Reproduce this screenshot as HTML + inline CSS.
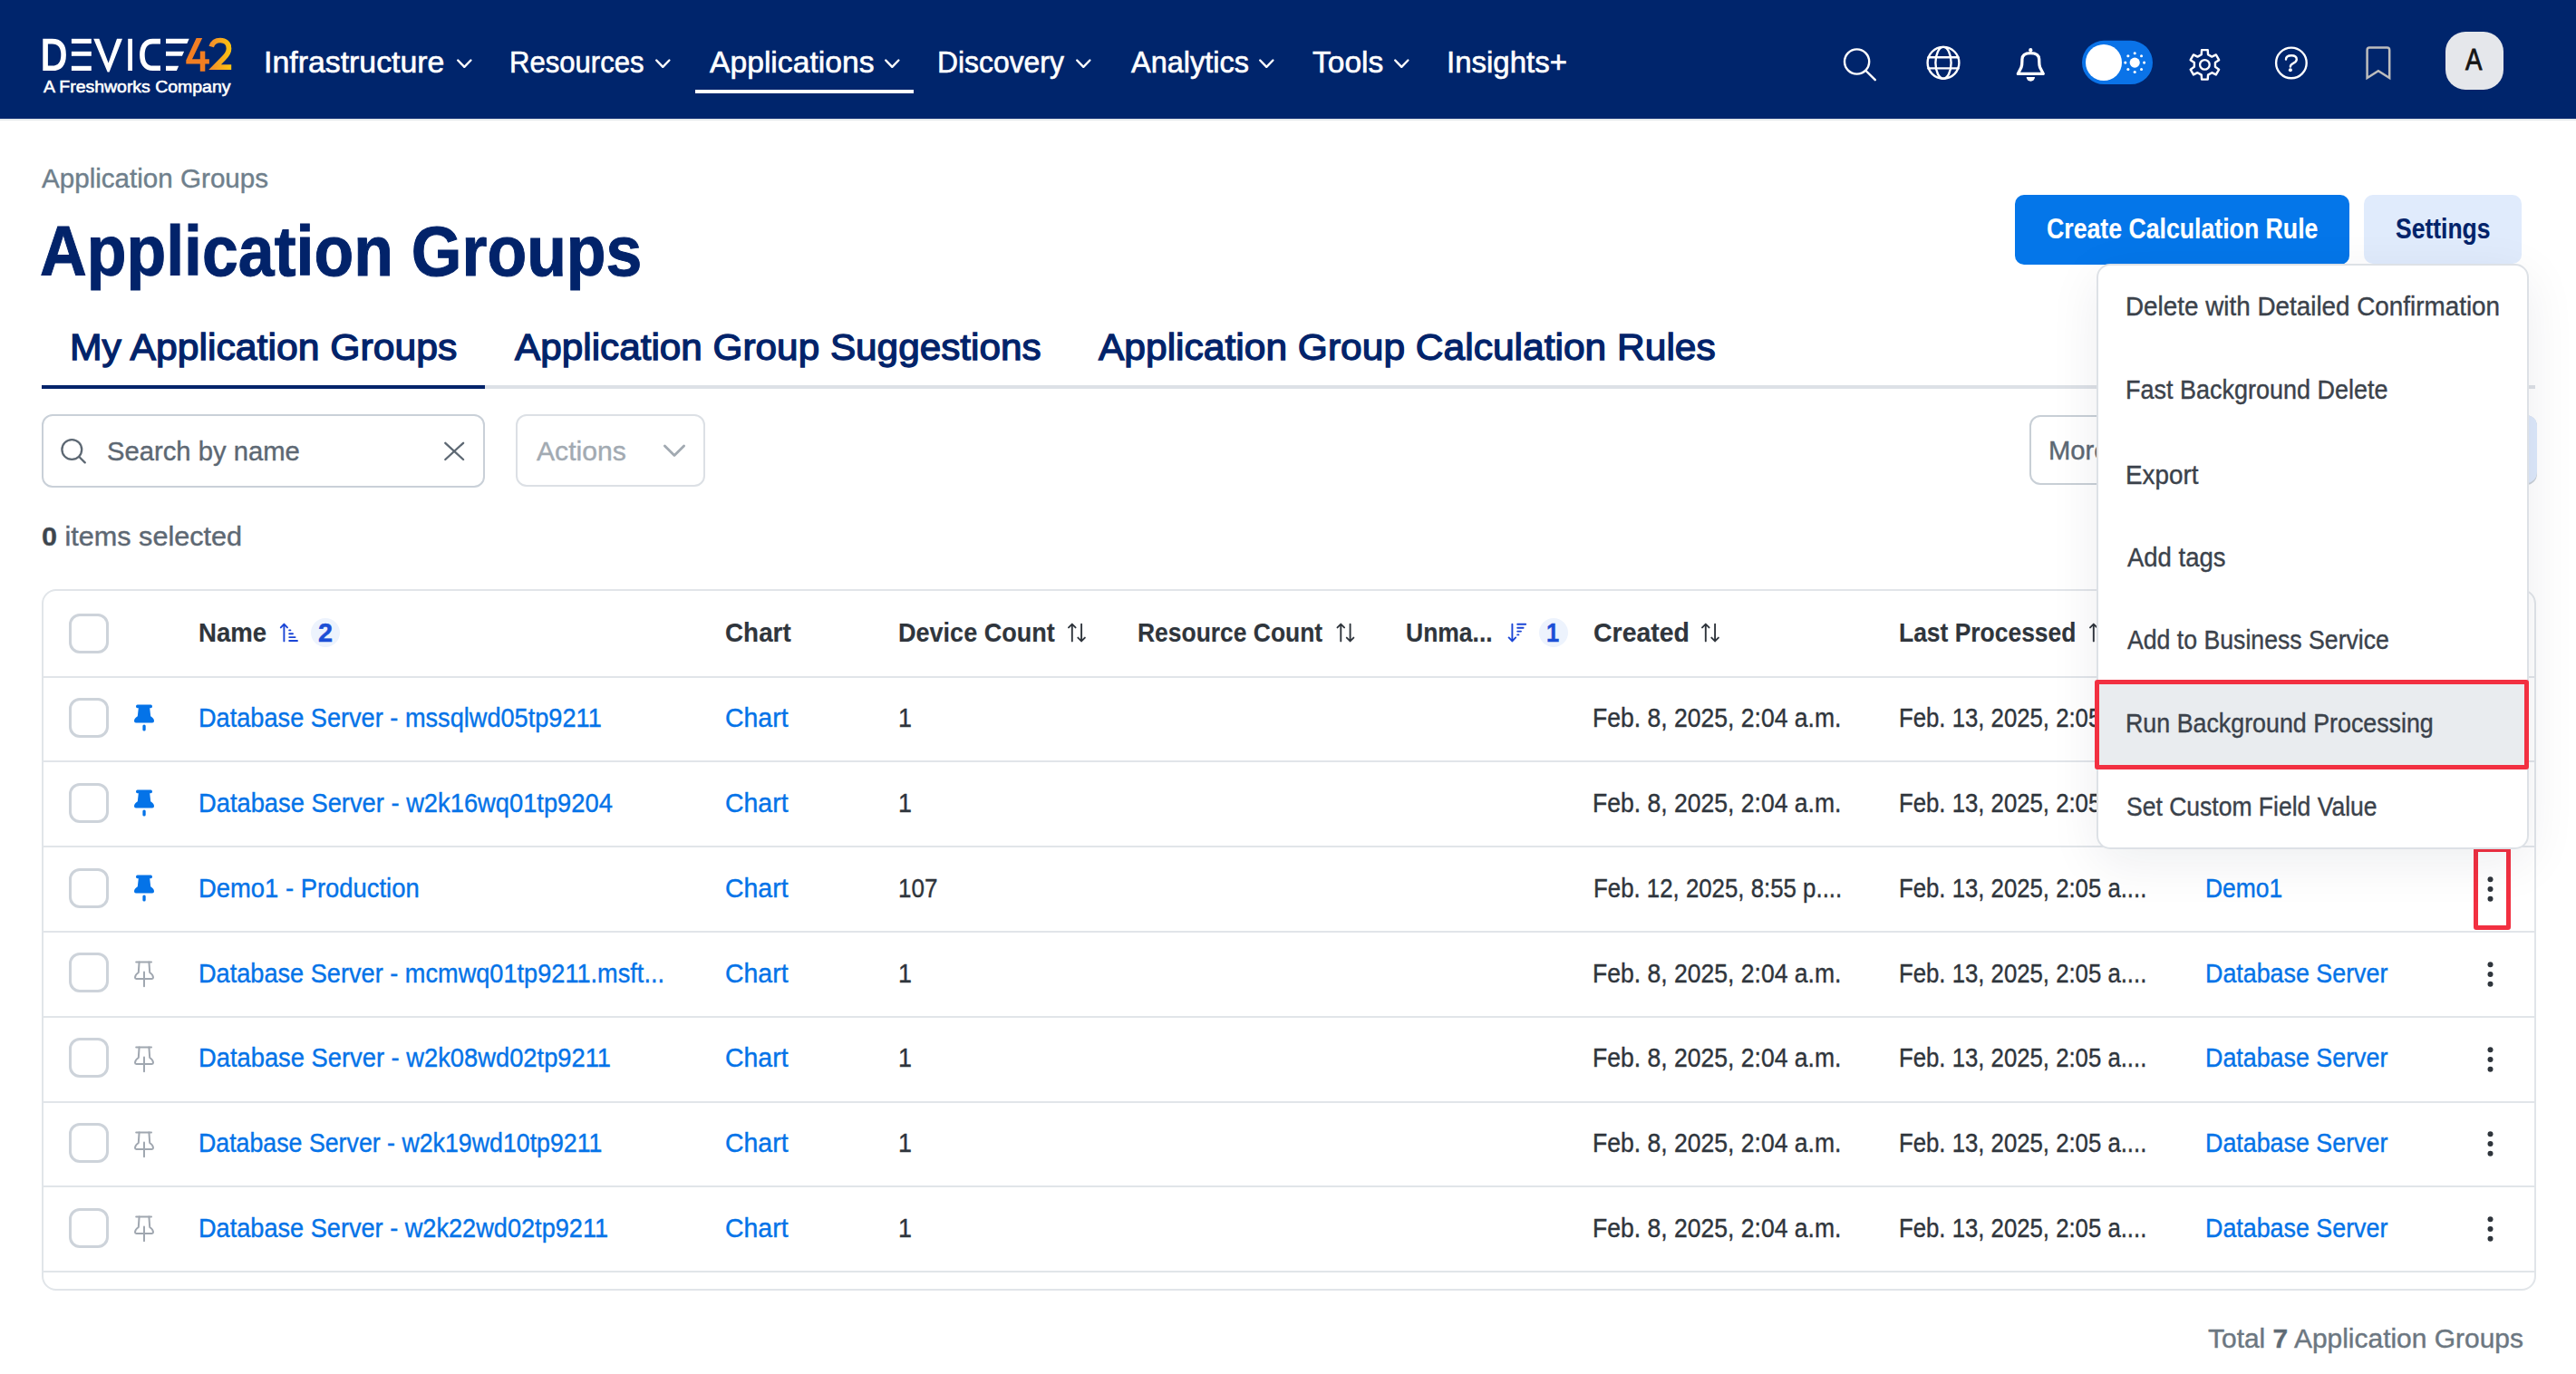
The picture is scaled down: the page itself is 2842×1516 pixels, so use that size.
<!DOCTYPE html>
<html><head><meta charset="utf-8"><title>Application Groups</title>
<style>
html,body{margin:0;padding:0;background:#fff;}
body{position:relative;width:2842px;height:1516px;overflow:hidden;font-family:"Liberation Sans",sans-serif;}
.t{position:absolute;white-space:nowrap;line-height:1;transform-origin:0 0;font-family:"Liberation Sans",sans-serif;}
.a{position:absolute;box-sizing:border-box;}
svg{position:absolute;overflow:visible;}
</style></head><body>

<div class="a" style="left:0;top:0;width:2842px;height:131px;background:#00256c"></div>
<div class="a" style="left:0;top:131px;width:2842px;height:2px;background:#e3e7ea"></div>
<svg style="left:40px;top:36px" width="220" height="76" viewBox="0 0 220 76">
<defs><linearGradient id="g2" x1="0" y1="0" x2="1" y2="0"><stop offset="0" stop-color="#f4902a"/><stop offset="1" stop-color="#fdc40f"/></linearGradient></defs>
<path d="M10.1,9.6 H17.5 C26.5,9.6 30.1,15.5 30.1,24.4 C30.1,33.3 26.5,39.3 17.5,39.3 H10.1 Z" fill="none" stroke="#fff" stroke-width="5.6"/>
<rect x="38.9" y="6.8" width="21.9" height="5.2" fill="#fff"/>
<rect x="38.9" y="20.8" width="21.9" height="5" fill="#fff"/>
<rect x="38.9" y="36.8" width="21.9" height="5.2" fill="#fff"/>
<path d="M63.2,6.8 H69.4 L79.6,33.6 L89,6.8 H95 L80.6,43.6 H78.6 Z" fill="#fff"/>
<rect x="101.2" y="6.8" width="4.8" height="35.2" fill="#fff"/>
<path d="M137,9.6 H128.5 C120.5,9.6 116.9,15.5 116.9,24.4 C116.9,33.3 120.5,39.3 128.5,39.3 H137" fill="none" stroke="#fff" stroke-width="5.6"/>
<path d="M143,6.8 H168.7 L166.4,12 H143 Z" fill="#fff"/>
<path d="M143,20.8 H163.1 L160.9,25.8 H143 Z" fill="#fff"/>
<path d="M143,36.8 H157.2 L154.9,42 H143 Z" fill="#fff"/>
<path d="M176.6,6 H183.2 L172,29.2 H180.8 V20.5 H186.3 V29.2 H190.9 V34.4 H186.3 V42.7 H180.8 V34.4 H165.3 V30.4 Z" fill="#f27e22"/>
<path d="M193.2,15.5 C195,9.5 199,8.5 203,8.5 C208.5,8.5 212.5,12 212.5,17.5 C212.5,21.5 210.5,24.5 207,28 L197,38.2 H215.2" fill="none" stroke="url(#g2)" stroke-width="5.7"/>
</svg>
<svg style="left:503.75px;top:65px" width="17" height="11" viewBox="0 0 17 11"><polyline points="1.2,1.5 8.3,8.8 15.4,1.5" fill="none" stroke="#fff" stroke-width="2.4" stroke-linecap="round" stroke-linejoin="round"/></svg>
<svg style="left:723.00px;top:65px" width="17" height="11" viewBox="0 0 17 11"><polyline points="1.2,1.5 8.3,8.8 15.4,1.5" fill="none" stroke="#fff" stroke-width="2.4" stroke-linecap="round" stroke-linejoin="round"/></svg>
<svg style="left:976.00px;top:65px" width="17" height="11" viewBox="0 0 17 11"><polyline points="1.2,1.5 8.3,8.8 15.4,1.5" fill="none" stroke="#fff" stroke-width="2.4" stroke-linecap="round" stroke-linejoin="round"/></svg>
<svg style="left:1187.00px;top:65px" width="17" height="11" viewBox="0 0 17 11"><polyline points="1.2,1.5 8.3,8.8 15.4,1.5" fill="none" stroke="#fff" stroke-width="2.4" stroke-linecap="round" stroke-linejoin="round"/></svg>
<svg style="left:1389.00px;top:65px" width="17" height="11" viewBox="0 0 17 11"><polyline points="1.2,1.5 8.3,8.8 15.4,1.5" fill="none" stroke="#fff" stroke-width="2.4" stroke-linecap="round" stroke-linejoin="round"/></svg>
<svg style="left:1537.80px;top:65px" width="17" height="11" viewBox="0 0 17 11"><polyline points="1.2,1.5 8.3,8.8 15.4,1.5" fill="none" stroke="#fff" stroke-width="2.4" stroke-linecap="round" stroke-linejoin="round"/></svg>
<div class="a" style="left:767px;top:99px;width:241px;height:4px;background:#fff"></div>
<svg style="left:0;top:0" width="2842" height="131" viewBox="0 0 2842 131">
<g fill="none" stroke="#fff" stroke-width="2.4" stroke-linecap="round" stroke-linejoin="round">
<circle cx="2048.6" cy="68" r="13.6"/>
<line x1="2058.5" y1="78" x2="2068.8" y2="88.2"/>
<circle cx="2144" cy="69.3" r="17.4"/>
<ellipse cx="2144" cy="69.3" rx="8.6" ry="17.4"/>
<line x1="2127.5" y1="63.2" x2="2160.5" y2="63.2"/>
<line x1="2127.5" y1="75.4" x2="2160.5" y2="75.4"/>
<path d="M2226.3,81.4 L2229.9,74.6 C2230.8,72.4 2230.9,70 2230.9,67 L2230.9,65.6 C2230.9,60.9 2234.6,58.6 2240.3,58.6 C2246,58.6 2249.7,60.9 2249.7,65.6 L2249.7,67 C2249.7,70 2249.8,72.4 2250.7,74.6 L2254.3,81.4 Z" stroke-width="3.3"/>
<circle cx="2527.9" cy="69.4" r="16.8"/>
<path d="M2522,65.6 C2522,62.6 2524.6,61.3 2528.1,61.3 C2531.6,61.3 2533.8,63.1 2533.8,65.6 C2533.8,68.2 2531.6,69.1 2529.6,70.1 C2527.6,71.1 2526.9,71.6 2526.9,73.5"/>
</g>
<circle cx="2240.3" cy="55.2" r="2.1" fill="#fff"/>
<path d="M2235.7,85 A4.65,4.65 0 0 0 2245,85 Z" fill="#fff"/>
<circle cx="2526.9" cy="77.3" r="2" fill="#fff"/>

<path d="M2428.75,60.18 L2429.09,55.13 L2435.71,55.13 L2436.05,60.18 L2440.30,62.63 L2444.83,60.40 L2448.14,66.13 L2443.94,68.95 L2443.94,73.85 L2448.14,76.67 L2444.83,82.40 L2440.30,80.17 L2436.05,82.62 L2435.71,87.67 L2429.09,87.67 L2428.75,82.62 L2424.50,80.17 L2419.97,82.40 L2416.66,76.67 L2420.86,73.85 L2420.86,68.95 L2416.66,66.13 L2419.97,60.40 L2424.50,62.63 Z" fill="none" stroke="#fff" stroke-width="2.4" stroke-linejoin="round"/>
<circle cx="2432.4" cy="71.4" r="5.3" fill="none" stroke="#fff" stroke-width="2.3"/>
<path d="M2611.6,86 V55.2 Q2611.6,52.6 2614.2,52.6 H2633.6 Q2636.2,52.6 2636.2,55.2 V86 L2623.9,78.2 Z" fill="none" stroke="#bdbdbd" stroke-width="2.5" stroke-linejoin="miter"/>
<rect x="2297" y="44.8" width="78" height="48.3" rx="24.15" fill="#0a73e8"/>
<circle cx="2321" cy="69" r="20" fill="#fff"/>
<circle cx="2355.2" cy="69.1" r="5.6" fill="#fff"/>
<circle cx="2365.60" cy="69.10" r="1.55" fill="#fff"/>
<circle cx="2362.55" cy="76.45" r="1.55" fill="#fff"/>
<circle cx="2355.20" cy="79.50" r="1.55" fill="#fff"/>
<circle cx="2347.85" cy="76.45" r="1.55" fill="#fff"/>
<circle cx="2344.80" cy="69.10" r="1.55" fill="#fff"/>
<circle cx="2347.85" cy="61.75" r="1.55" fill="#fff"/>
<circle cx="2355.20" cy="58.70" r="1.55" fill="#fff"/>
<circle cx="2362.55" cy="61.75" r="1.55" fill="#fff"/>
</svg>
<div class="a" style="left:2698px;top:34.6px;width:64px;height:64px;border-radius:22px;background:#e5e7eb"></div>
<div class="a" style="left:2223px;top:215px;width:369px;height:76.5px;border-radius:10px;background:#0476e9"></div>
<div class="a" style="left:2608px;top:215px;width:174px;height:76px;border-radius:10px;background:#e0ebfc"></div>
<div class="a" style="left:46px;top:425px;width:2751px;height:3.5px;background:#dde1e6"></div>
<div class="a" style="left:46px;top:425px;width:489px;height:4px;background:#02236a"></div>
<div class="a" style="left:46px;top:457.3px;width:489px;height:80.5px;border:2px solid #c9d0d8;border-radius:12px"></div>
<svg style="left:0;top:0" width="800" height="560" viewBox="0 0 800 560"><g fill="none" stroke="#5d6873" stroke-width="2.3" stroke-linecap="round"><circle cx="79.3" cy="496" r="10.9"/><line x1="87.3" y1="504" x2="93.7" y2="510.4"/><line x1="491.3" y1="488.8" x2="511.1" y2="507"/><line x1="511.1" y1="488.8" x2="491.3" y2="507"/></g><polyline points="733.4,492 744,502.4 754.6,492" fill="none" stroke="#a2aab2" stroke-width="2.8" stroke-linecap="round" stroke-linejoin="round"/></svg>
<div class="a" style="left:569px;top:457.3px;width:209px;height:80px;border:2px solid #dce0e5;border-radius:12px"></div>
<div class="a" style="left:2238.6px;top:457.5px;width:560px;height:77px;border:2px solid #c8cfd6;border-radius:12px"></div>
<div class="a" style="left:2770px;top:457.5px;width:28.5px;height:75px;border-radius:12px;background:#dde9fb"></div>
<div class="a" style="left:46px;top:650px;width:2751.5px;height:774px;border:2px solid #e1e5e9;border-radius:16px"></div>
<div class="a" style="left:48px;top:745.60px;width:2748px;height:2px;background:#e1e5e9"></div>
<div class="a" style="left:48px;top:839.40px;width:2748px;height:2px;background:#e1e5e9"></div>
<div class="a" style="left:48px;top:933.20px;width:2748px;height:2px;background:#e1e5e9"></div>
<div class="a" style="left:48px;top:1027.00px;width:2748px;height:2px;background:#e1e5e9"></div>
<div class="a" style="left:48px;top:1120.80px;width:2748px;height:2px;background:#e1e5e9"></div>
<div class="a" style="left:48px;top:1214.60px;width:2748px;height:2px;background:#e1e5e9"></div>
<div class="a" style="left:48px;top:1308.40px;width:2748px;height:2px;background:#e1e5e9"></div>
<div class="a" style="left:48px;top:1402.20px;width:2748px;height:2px;background:#e1e5e9"></div>
<div class="a" style="left:76px;top:676.50px;width:44px;height:44px;border:3.7px solid #cdd3da;border-radius:12px"></div>
<div class="a" style="left:76px;top:770.00px;width:44px;height:44px;border:3.7px solid #cdd3da;border-radius:12px"></div>
<div class="a" style="left:76px;top:863.80px;width:44px;height:44px;border:3.7px solid #cdd3da;border-radius:12px"></div>
<div class="a" style="left:76px;top:957.60px;width:44px;height:44px;border:3.7px solid #cdd3da;border-radius:12px"></div>
<div class="a" style="left:76px;top:1051.40px;width:44px;height:44px;border:3.7px solid #cdd3da;border-radius:12px"></div>
<div class="a" style="left:76px;top:1145.20px;width:44px;height:44px;border:3.7px solid #cdd3da;border-radius:12px"></div>
<div class="a" style="left:76px;top:1239.00px;width:44px;height:44px;border:3.7px solid #cdd3da;border-radius:12px"></div>
<div class="a" style="left:76px;top:1332.80px;width:44px;height:44px;border:3.7px solid #cdd3da;border-radius:12px"></div>
<svg style="left:146px;top:777.00px" width="26" height="32" viewBox="0 0 26 32"><path d="M5.6,0.6 H20.4 Q22,0.6 22,2.4 Q22,4.2 20.4,4.2 H19.2 L20.2,13.2 Q24,15.4 24,18.6 Q24,20.6 22,20.6 H4 Q2,20.6 2,18.6 Q2,15.4 5.8,13.2 L6.8,4.2 H5.6 Q4,4.2 4,2.4 Q4,0.6 5.6,0.6 Z" fill="#0473e8"/><rect x="11.4" y="22.4" width="3.3" height="7.2" rx="1.6" fill="#0473e8"/></svg>
<svg style="left:146px;top:870.80px" width="26" height="32" viewBox="0 0 26 32"><path d="M5.6,0.6 H20.4 Q22,0.6 22,2.4 Q22,4.2 20.4,4.2 H19.2 L20.2,13.2 Q24,15.4 24,18.6 Q24,20.6 22,20.6 H4 Q2,20.6 2,18.6 Q2,15.4 5.8,13.2 L6.8,4.2 H5.6 Q4,4.2 4,2.4 Q4,0.6 5.6,0.6 Z" fill="#0473e8"/><rect x="11.4" y="22.4" width="3.3" height="7.2" rx="1.6" fill="#0473e8"/></svg>
<svg style="left:146px;top:964.60px" width="26" height="32" viewBox="0 0 26 32"><path d="M5.6,0.6 H20.4 Q22,0.6 22,2.4 Q22,4.2 20.4,4.2 H19.2 L20.2,13.2 Q24,15.4 24,18.6 Q24,20.6 22,20.6 H4 Q2,20.6 2,18.6 Q2,15.4 5.8,13.2 L6.8,4.2 H5.6 Q4,4.2 4,2.4 Q4,0.6 5.6,0.6 Z" fill="#0473e8"/><rect x="11.4" y="22.4" width="3.3" height="7.2" rx="1.6" fill="#0473e8"/></svg>
<svg style="left:146px;top:1059.90px" width="26" height="32" viewBox="0 0 26 32"><g fill="none" stroke="#a0a7b0" stroke-width="2" stroke-linecap="round" stroke-linejoin="round"><path d="M4.2,1.4 H21"/><path d="M7.6,1.4 L6.8,13 Q3,15.4 3,18.6 Q3,19.9 4.4,19.9 H21.6 Q23,19.9 23,18.6 Q23,15.4 19.2,13 L18.4,1.4"/><path d="M13,12.4 V28.2"/></g></svg>
<svg style="left:146px;top:1153.70px" width="26" height="32" viewBox="0 0 26 32"><g fill="none" stroke="#a0a7b0" stroke-width="2" stroke-linecap="round" stroke-linejoin="round"><path d="M4.2,1.4 H21"/><path d="M7.6,1.4 L6.8,13 Q3,15.4 3,18.6 Q3,19.9 4.4,19.9 H21.6 Q23,19.9 23,18.6 Q23,15.4 19.2,13 L18.4,1.4"/><path d="M13,12.4 V28.2"/></g></svg>
<svg style="left:146px;top:1247.50px" width="26" height="32" viewBox="0 0 26 32"><g fill="none" stroke="#a0a7b0" stroke-width="2" stroke-linecap="round" stroke-linejoin="round"><path d="M4.2,1.4 H21"/><path d="M7.6,1.4 L6.8,13 Q3,15.4 3,18.6 Q3,19.9 4.4,19.9 H21.6 Q23,19.9 23,18.6 Q23,15.4 19.2,13 L18.4,1.4"/><path d="M13,12.4 V28.2"/></g></svg>
<svg style="left:146px;top:1341.30px" width="26" height="32" viewBox="0 0 26 32"><g fill="none" stroke="#a0a7b0" stroke-width="2" stroke-linecap="round" stroke-linejoin="round"><path d="M4.2,1.4 H21"/><path d="M7.6,1.4 L6.8,13 Q3,15.4 3,18.6 Q3,19.9 4.4,19.9 H21.6 Q23,19.9 23,18.6 Q23,15.4 19.2,13 L18.4,1.4"/><path d="M13,12.4 V28.2"/></g></svg>
<svg style="left:0;top:0" width="1950" height="760" viewBox="0 0 1950 760">
<g fill="none" stroke-linecap="round" stroke-linejoin="round" stroke-width="1.9">
<g stroke="#1a45d6"><path d="M313.4,707.4 V688.6 M309.8,692.4 L313.4,688.6 L317,692.4"/>
<path d="M319.2,695.4 H320.4 M319.2,699.2 H323 M319.2,703.1 H325.6 M319.2,707 H328"/>
<path d="M1668.4,688.6 V707.4 M1664.6,703.4 L1668.4,707.4 L1672.2,703.4"/>
<path d="M1674.2,688.8 H1683.2 M1674.2,692.7 H1680.6 M1674.2,696.6 H1678 M1674.2,700.4 H1675.4"/></g>
<g stroke="#2f353c">
<path d="M1182.8,707.4 V688.6 M1179.0,692.4 L1182.8,688.6 L1186.6,692.4 M1193.1,688.6 V707.4 M1189.3,703.6 L1193.1,707.4 L1196.9,703.6"/>
<path d="M1479.3,707.4 V688.6 M1475.5,692.4 L1479.3,688.6 L1483.1,692.4 M1489.6,688.6 V707.4 M1485.8,703.6 L1489.6,707.4 L1493.4,703.6"/>
<path d="M1881.8,707.4 V688.6 M1878.0,692.4 L1881.8,688.6 L1885.6,692.4 M1892.1,688.6 V707.4 M1888.3,703.6 L1892.1,707.4 L1895.9,703.6"/>
<path d="M2309.8,707.4 V688.6 M2306.0,692.4 L2309.8,688.6 L2313.6,692.4 M2320.1,688.6 V707.4 M2316.3,703.6 L2320.1,707.4 L2323.9,703.6"/>
</g></g><circle cx="359" cy="698" r="16" fill="#edf3fd"/><circle cx="1714" cy="698" r="16" fill="#edf3fd"/></svg>
<svg style="left:2740px;top:965.90px" width="15" height="30" viewBox="0 0 15 30"><circle cx="7.5" cy="4.3" r="3" fill="#2f353c"/><circle cx="7.5" cy="15" r="3" fill="#2f353c"/><circle cx="7.5" cy="25.7" r="3" fill="#2f353c"/></svg>
<svg style="left:2740px;top:1059.70px" width="15" height="30" viewBox="0 0 15 30"><circle cx="7.5" cy="4.3" r="3" fill="#2f353c"/><circle cx="7.5" cy="15" r="3" fill="#2f353c"/><circle cx="7.5" cy="25.7" r="3" fill="#2f353c"/></svg>
<svg style="left:2740px;top:1153.50px" width="15" height="30" viewBox="0 0 15 30"><circle cx="7.5" cy="4.3" r="3" fill="#2f353c"/><circle cx="7.5" cy="15" r="3" fill="#2f353c"/><circle cx="7.5" cy="25.7" r="3" fill="#2f353c"/></svg>
<svg style="left:2740px;top:1247.30px" width="15" height="30" viewBox="0 0 15 30"><circle cx="7.5" cy="4.3" r="3" fill="#2f353c"/><circle cx="7.5" cy="15" r="3" fill="#2f353c"/><circle cx="7.5" cy="25.7" r="3" fill="#2f353c"/></svg>
<svg style="left:2740px;top:1341.10px" width="15" height="30" viewBox="0 0 15 30"><circle cx="7.5" cy="4.3" r="3" fill="#2f353c"/><circle cx="7.5" cy="15" r="3" fill="#2f353c"/><circle cx="7.5" cy="25.7" r="3" fill="#2f353c"/></svg>
<div class="a" style="left:2728.5px;top:934.5px;width:41.5px;height:91.5px;border:5.2px solid #f23041;border-radius:3px"></div>
<div class="t" style="left:291.46px;top:51.65px;font-size:33.43px;font-weight:400;color:#ffffff;transform:scaleX(1.0130);-webkit-text-stroke:0.6px #ffffff">Infrastructure</div>
<div class="t" style="left:562.21px;top:51.65px;font-size:33.43px;font-weight:400;color:#ffffff;transform:scaleX(0.9295);-webkit-text-stroke:0.6px #ffffff">Resources</div>
<div class="t" style="left:782.75px;top:51.65px;font-size:33.43px;font-weight:400;color:#ffffff;transform:scaleX(1.0070);-webkit-text-stroke:0.6px #ffffff">Applications</div>
<div class="t" style="left:1033.84px;top:51.65px;font-size:33.43px;font-weight:400;color:#ffffff;transform:scaleX(0.9535);-webkit-text-stroke:0.6px #ffffff">Discovery</div>
<div class="t" style="left:1247.50px;top:51.65px;font-size:33.43px;font-weight:400;color:#ffffff;transform:scaleX(0.9714);-webkit-text-stroke:0.6px #ffffff">Analytics</div>
<div class="t" style="left:1448.30px;top:51.65px;font-size:33.43px;font-weight:400;color:#ffffff;transform:scaleX(1.0026);-webkit-text-stroke:0.6px #ffffff">Tools</div>
<div class="t" style="left:1595.94px;top:51.65px;font-size:33.43px;font-weight:400;color:#ffffff;transform:scaleX(0.9877);-webkit-text-stroke:0.6px #ffffff">Insights+</div>
<div class="t" style="left:47.70px;top:86.52px;font-size:18.02px;font-weight:400;color:#ffffff;transform:scaleX(1.0796);-webkit-text-stroke:0.55px #ffffff">A Freshworks Company</div>
<div class="t" style="left:2720.00px;top:49.94px;font-size:32.85px;font-weight:400;color:#151515;transform:scaleX(0.8409);-webkit-text-stroke:0.8px #151515">A</div>
<div class="t" style="left:46.25px;top:183.35px;font-size:29.07px;font-weight:400;color:#6f7f8c;transform:scaleX(1.0184);-webkit-text-stroke:0.4px #6f7f8c">Application Groups</div>
<div class="t" style="left:44.42px;top:237.94px;font-size:78.49px;font-weight:700;color:#02236a;transform:scaleX(0.9125);-webkit-text-stroke:1.0px #02236a">Application Groups</div>
<div class="t" style="left:76.88px;top:362.68px;font-size:41.06px;font-weight:400;color:#02236a;transform:scaleX(1.0406);-webkit-text-stroke:1.3px #02236a">My Application Groups</div>
<div class="t" style="left:567.50px;top:362.68px;font-size:41.06px;font-weight:400;color:#02236a;transform:scaleX(1.0302);-webkit-text-stroke:1.3px #02236a">Application Group Suggestions</div>
<div class="t" style="left:1212.00px;top:362.68px;font-size:41.06px;font-weight:400;color:#02236a;transform:scaleX(1.0360);-webkit-text-stroke:1.3px #02236a">Application Group Calculation Rules</div>
<div class="t" style="left:2257.89px;top:237.56px;font-size:30.89px;font-weight:700;color:#ffffff;transform:scaleX(0.8638);-webkit-text-stroke:0.15px #ffffff">Create Calculation Rule</div>
<div class="t" style="left:2642.89px;top:237.56px;font-size:30.89px;font-weight:700;color:#02236a;transform:scaleX(0.8583);-webkit-text-stroke:0.15px #02236a">Settings</div>
<div class="t" style="left:118.03px;top:482.66px;font-size:30.23px;font-weight:400;color:#5d6873;transform:scaleX(0.9670);-webkit-text-stroke:0.4px #5d6873">Search by name</div>
<div class="t" style="left:591.60px;top:482.66px;font-size:30.23px;font-weight:400;color:#a2aab2;transform:scaleX(0.9980);-webkit-text-stroke:0.4px #a2aab2">Actions</div>
<div class="t" style="left:2260.37px;top:482.16px;font-size:30.23px;font-weight:400;color:#5d6873;transform:scaleX(0.9670);-webkit-text-stroke:0.4px #5d6873">More</div>
<div class="t" style="left:45.54px;top:577.60px;font-size:28.78px;font-weight:400;color:#5d6873;transform:scaleX(1.0634);-webkit-text-stroke:0.4px #5d6873"><b style="color:#3d454d">0</b> items selected</div>
<div class="t" style="left:219.13px;top:683.08px;font-size:29.51px;font-weight:700;color:#2f353c;transform:scaleX(0.9359);-webkit-text-stroke:0.15px #2f353c">Name</div>
<div class="t" style="left:799.81px;top:683.08px;font-size:29.51px;font-weight:700;color:#2f353c;transform:scaleX(0.9441);-webkit-text-stroke:0.15px #2f353c">Chart</div>
<div class="t" style="left:990.67px;top:683.08px;font-size:29.51px;font-weight:700;color:#2f353c;transform:scaleX(0.9167);-webkit-text-stroke:0.15px #2f353c">Device Count</div>
<div class="t" style="left:1255.21px;top:683.08px;font-size:29.51px;font-weight:700;color:#2f353c;transform:scaleX(0.8960);-webkit-text-stroke:0.15px #2f353c">Resource Count</div>
<div class="t" style="left:1550.70px;top:683.08px;font-size:29.51px;font-weight:700;color:#2f353c;transform:scaleX(0.8981);-webkit-text-stroke:0.15px #2f353c">Unma...</div>
<div class="t" style="left:1757.79px;top:683.08px;font-size:29.51px;font-weight:700;color:#2f353c;transform:scaleX(0.9650);-webkit-text-stroke:0.15px #2f353c">Created</div>
<div class="t" style="left:2095.21px;top:683.08px;font-size:29.51px;font-weight:700;color:#2f353c;transform:scaleX(0.8960);-webkit-text-stroke:0.15px #2f353c">Last Processed</div>
<div class="t" style="left:351.00px;top:684.40px;font-size:28.78px;font-weight:700;color:#1c4fd6;-webkit-text-stroke:0.5px #1c4fd6">2</div>
<div class="t" style="left:1705.73px;top:684.40px;font-size:28.78px;font-weight:700;color:#1c4fd6;transform:scaleX(0.8846);-webkit-text-stroke:0.5px #1c4fd6">1</div>
<div class="t" style="left:219.18px;top:777.23px;font-size:29.80px;font-weight:400;color:#0473e8;transform:scaleX(0.9113);-webkit-text-stroke:0.4px #0473e8">Database Server - mssqlwd05tp9211</div>
<div class="t" style="left:799.80px;top:777.23px;font-size:29.80px;font-weight:400;color:#0473e8;transform:scaleX(0.9549);-webkit-text-stroke:0.4px #0473e8">Chart</div>
<div class="t" style="left:991.20px;top:777.23px;font-size:29.80px;font-weight:400;color:#2f353c;transform:scaleX(0.9024);-webkit-text-stroke:0.4px #2f353c">1</div>
<div class="t" style="left:1757.47px;top:777.23px;font-size:29.80px;font-weight:400;color:#2f353c;transform:scaleX(0.8906);-webkit-text-stroke:0.4px #2f353c">Feb. 8, 2025, 2:04 a.m.</div>
<div class="t" style="left:2095.47px;top:777.23px;font-size:29.80px;font-weight:400;color:#2f353c;transform:scaleX(0.8638);-webkit-text-stroke:0.4px #2f353c">Feb. 13, 2025, 2:05 a....</div>
<div class="t" style="left:2433.20px;top:777.23px;font-size:29.80px;font-weight:400;color:#0473e8;transform:scaleX(0.9005);-webkit-text-stroke:0.4px #0473e8">Database Server</div>
<div class="t" style="left:219.17px;top:871.03px;font-size:29.80px;font-weight:400;color:#0473e8;transform:scaleX(0.9163);-webkit-text-stroke:0.4px #0473e8">Database Server - w2k16wq01tp9204</div>
<div class="t" style="left:799.80px;top:871.03px;font-size:29.80px;font-weight:400;color:#0473e8;transform:scaleX(0.9549);-webkit-text-stroke:0.4px #0473e8">Chart</div>
<div class="t" style="left:991.20px;top:871.03px;font-size:29.80px;font-weight:400;color:#2f353c;transform:scaleX(0.9024);-webkit-text-stroke:0.4px #2f353c">1</div>
<div class="t" style="left:1757.47px;top:871.03px;font-size:29.80px;font-weight:400;color:#2f353c;transform:scaleX(0.8906);-webkit-text-stroke:0.4px #2f353c">Feb. 8, 2025, 2:04 a.m.</div>
<div class="t" style="left:2095.47px;top:871.03px;font-size:29.80px;font-weight:400;color:#2f353c;transform:scaleX(0.8638);-webkit-text-stroke:0.4px #2f353c">Feb. 13, 2025, 2:05 a....</div>
<div class="t" style="left:2433.20px;top:871.03px;font-size:29.80px;font-weight:400;color:#0473e8;transform:scaleX(0.9005);-webkit-text-stroke:0.4px #0473e8">Database Server</div>
<div class="t" style="left:219.16px;top:964.83px;font-size:29.80px;font-weight:400;color:#0473e8;transform:scaleX(0.9195);-webkit-text-stroke:0.4px #0473e8">Demo1 - Production</div>
<div class="t" style="left:799.80px;top:964.83px;font-size:29.80px;font-weight:400;color:#0473e8;transform:scaleX(0.9549);-webkit-text-stroke:0.4px #0473e8">Chart</div>
<div class="t" style="left:991.26px;top:964.83px;font-size:29.80px;font-weight:400;color:#2f353c;transform:scaleX(0.8723);-webkit-text-stroke:0.4px #2f353c">107</div>
<div class="t" style="left:1757.52px;top:964.83px;font-size:29.80px;font-weight:400;color:#2f353c;transform:scaleX(0.8665);-webkit-text-stroke:0.4px #2f353c">Feb. 12, 2025, 8:55 p....</div>
<div class="t" style="left:2095.47px;top:964.83px;font-size:29.80px;font-weight:400;color:#2f353c;transform:scaleX(0.8638);-webkit-text-stroke:0.4px #2f353c">Feb. 13, 2025, 2:05 a....</div>
<div class="t" style="left:2433.23px;top:964.83px;font-size:29.80px;font-weight:400;color:#0473e8;transform:scaleX(0.8871);-webkit-text-stroke:0.4px #0473e8">Demo1</div>
<div class="t" style="left:219.18px;top:1058.63px;font-size:29.80px;font-weight:400;color:#0473e8;transform:scaleX(0.9111);-webkit-text-stroke:0.4px #0473e8">Database Server - mcmwq01tp9211.msft...</div>
<div class="t" style="left:799.80px;top:1058.63px;font-size:29.80px;font-weight:400;color:#0473e8;transform:scaleX(0.9549);-webkit-text-stroke:0.4px #0473e8">Chart</div>
<div class="t" style="left:991.20px;top:1058.63px;font-size:29.80px;font-weight:400;color:#2f353c;transform:scaleX(0.9024);-webkit-text-stroke:0.4px #2f353c">1</div>
<div class="t" style="left:1757.47px;top:1058.63px;font-size:29.80px;font-weight:400;color:#2f353c;transform:scaleX(0.8906);-webkit-text-stroke:0.4px #2f353c">Feb. 8, 2025, 2:04 a.m.</div>
<div class="t" style="left:2095.47px;top:1058.63px;font-size:29.80px;font-weight:400;color:#2f353c;transform:scaleX(0.8638);-webkit-text-stroke:0.4px #2f353c">Feb. 13, 2025, 2:05 a....</div>
<div class="t" style="left:2433.20px;top:1058.63px;font-size:29.80px;font-weight:400;color:#0473e8;transform:scaleX(0.9005);-webkit-text-stroke:0.4px #0473e8">Database Server</div>
<div class="t" style="left:219.17px;top:1152.43px;font-size:29.80px;font-weight:400;color:#0473e8;transform:scaleX(0.9168);-webkit-text-stroke:0.4px #0473e8">Database Server - w2k08wd02tp9211</div>
<div class="t" style="left:799.80px;top:1152.43px;font-size:29.80px;font-weight:400;color:#0473e8;transform:scaleX(0.9549);-webkit-text-stroke:0.4px #0473e8">Chart</div>
<div class="t" style="left:991.20px;top:1152.43px;font-size:29.80px;font-weight:400;color:#2f353c;transform:scaleX(0.9024);-webkit-text-stroke:0.4px #2f353c">1</div>
<div class="t" style="left:1757.47px;top:1152.43px;font-size:29.80px;font-weight:400;color:#2f353c;transform:scaleX(0.8906);-webkit-text-stroke:0.4px #2f353c">Feb. 8, 2025, 2:04 a.m.</div>
<div class="t" style="left:2095.47px;top:1152.43px;font-size:29.80px;font-weight:400;color:#2f353c;transform:scaleX(0.8638);-webkit-text-stroke:0.4px #2f353c">Feb. 13, 2025, 2:05 a....</div>
<div class="t" style="left:2433.20px;top:1152.43px;font-size:29.80px;font-weight:400;color:#0473e8;transform:scaleX(0.9005);-webkit-text-stroke:0.4px #0473e8">Database Server</div>
<div class="t" style="left:219.21px;top:1246.23px;font-size:29.80px;font-weight:400;color:#0473e8;transform:scaleX(0.8974);-webkit-text-stroke:0.4px #0473e8">Database Server - w2k19wd10tp9211</div>
<div class="t" style="left:799.80px;top:1246.23px;font-size:29.80px;font-weight:400;color:#0473e8;transform:scaleX(0.9549);-webkit-text-stroke:0.4px #0473e8">Chart</div>
<div class="t" style="left:991.20px;top:1246.23px;font-size:29.80px;font-weight:400;color:#2f353c;transform:scaleX(0.9024);-webkit-text-stroke:0.4px #2f353c">1</div>
<div class="t" style="left:1757.47px;top:1246.23px;font-size:29.80px;font-weight:400;color:#2f353c;transform:scaleX(0.8906);-webkit-text-stroke:0.4px #2f353c">Feb. 8, 2025, 2:04 a.m.</div>
<div class="t" style="left:2095.47px;top:1246.23px;font-size:29.80px;font-weight:400;color:#2f353c;transform:scaleX(0.8638);-webkit-text-stroke:0.4px #2f353c">Feb. 13, 2025, 2:05 a....</div>
<div class="t" style="left:2433.20px;top:1246.23px;font-size:29.80px;font-weight:400;color:#0473e8;transform:scaleX(0.9005);-webkit-text-stroke:0.4px #0473e8">Database Server</div>
<div class="t" style="left:219.18px;top:1340.03px;font-size:29.80px;font-weight:400;color:#0473e8;transform:scaleX(0.9108);-webkit-text-stroke:0.4px #0473e8">Database Server - w2k22wd02tp9211</div>
<div class="t" style="left:799.80px;top:1340.03px;font-size:29.80px;font-weight:400;color:#0473e8;transform:scaleX(0.9549);-webkit-text-stroke:0.4px #0473e8">Chart</div>
<div class="t" style="left:991.20px;top:1340.03px;font-size:29.80px;font-weight:400;color:#2f353c;transform:scaleX(0.9024);-webkit-text-stroke:0.4px #2f353c">1</div>
<div class="t" style="left:1757.47px;top:1340.03px;font-size:29.80px;font-weight:400;color:#2f353c;transform:scaleX(0.8906);-webkit-text-stroke:0.4px #2f353c">Feb. 8, 2025, 2:04 a.m.</div>
<div class="t" style="left:2095.47px;top:1340.03px;font-size:29.80px;font-weight:400;color:#2f353c;transform:scaleX(0.8638);-webkit-text-stroke:0.4px #2f353c">Feb. 13, 2025, 2:05 a....</div>
<div class="t" style="left:2433.20px;top:1340.03px;font-size:29.80px;font-weight:400;color:#0473e8;transform:scaleX(0.9005);-webkit-text-stroke:0.4px #0473e8">Database Server</div>
<div class="t" style="left:2435.72px;top:1463.35px;font-size:29.07px;font-weight:400;color:#6c7781;transform:scaleX(1.0305);-webkit-text-stroke:0.4px #6c7781">Total <b style="color:#5f6b75">7</b> Application Groups</div>
<div class="a" style="left:2313px;top:291px;width:477px;height:645.5px;border-radius:15px;background:#fff;border:2px solid #dde1e6;box-shadow:0 14px 56px rgba(20,30,50,0.075)"></div>
<div class="a" style="left:2315px;top:755px;width:470px;height:89px;background:#e9ecef"></div>
<div class="a" style="left:2310.5px;top:750px;width:479px;height:99.3px;border:5.3px solid #f23041;border-radius:3px"></div>
<div class="t" style="left:2344.86px;top:322.78px;font-size:29.51px;font-weight:400;color:#3b424b;transform:scaleX(0.9435);-webkit-text-stroke:0.4px #3b424b">Delete with Detailed Confirmation</div>
<div class="t" style="left:2344.92px;top:415.28px;font-size:29.51px;font-weight:400;color:#3b424b;transform:scaleX(0.9145);-webkit-text-stroke:0.4px #3b424b">Fast Background Delete</div>
<div class="t" style="left:2344.86px;top:509.03px;font-size:29.51px;font-weight:400;color:#3b424b;transform:scaleX(0.9428);-webkit-text-stroke:0.4px #3b424b">Export</div>
<div class="t" style="left:2346.75px;top:600.28px;font-size:29.51px;font-weight:400;color:#3b424b;transform:scaleX(0.9310);-webkit-text-stroke:0.4px #3b424b">Add tags</div>
<div class="t" style="left:2346.75px;top:691.28px;font-size:29.51px;font-weight:400;color:#3b424b;transform:scaleX(0.9036);-webkit-text-stroke:0.4px #3b424b">Add to Business Service</div>
<div class="t" style="left:2344.93px;top:782.78px;font-size:29.51px;font-weight:400;color:#3b424b;transform:scaleX(0.9088);-webkit-text-stroke:0.4px #3b424b">Run Background Processing</div>
<div class="t" style="left:2345.85px;top:875.28px;font-size:29.51px;font-weight:400;color:#3b424b;transform:scaleX(0.8987);-webkit-text-stroke:0.4px #3b424b">Set Custom Field Value</div>
</body></html>
